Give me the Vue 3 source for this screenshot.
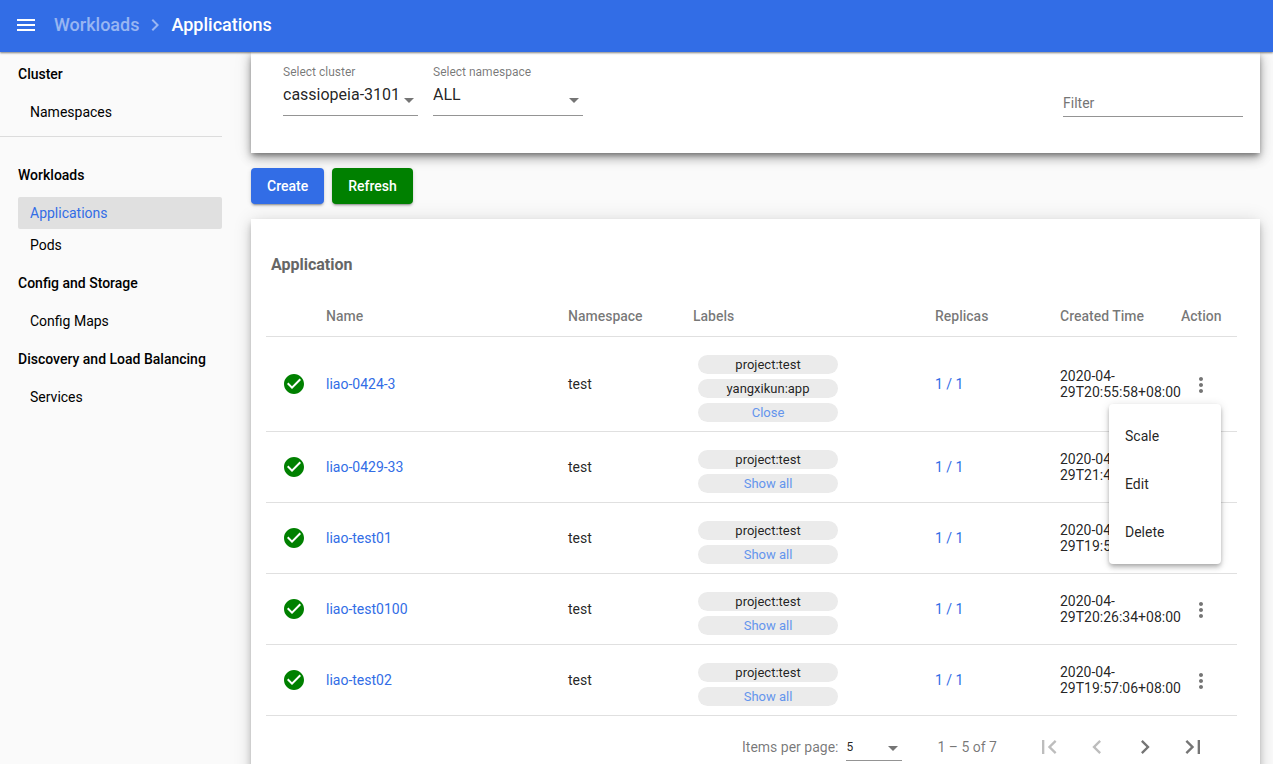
<script setup>
import { ref } from 'vue'

const groups = [
  { title: 'Cluster', items: ['Namespaces'], divider: true },
  { title: 'Workloads', items: ['Applications', 'Pods'] },
  { title: 'Config and Storage', items: ['Config Maps'] },
  { title: 'Discovery and Load Balancing', items: ['Services'] },
]
const active = ref('Applications')

const cluster = ref('cassiopeia-3101')
const namespace = ref('ALL')
const filter = ref('')
const pageSize = ref('5')

const rows = ref([
  { name: 'liao-0424-3', time: '2020-04-29T20:55:58+08:00', open: true },
  { name: 'liao-0429-33', time: '2020-04-29T21:45:12+08:00', open: false },
  { name: 'liao-test01', time: '2020-04-29T19:56:41+08:00', open: false },
  { name: 'liao-test0100', time: '2020-04-29T20:26:34+08:00', open: false },
  { name: 'liao-test02', time: '2020-04-29T19:57:06+08:00', open: false },
])
const menuRow = ref('liao-0424-3')
const toggleMenu = (name) => {
  menuRow.value = menuRow.value === name ? '' : name
}
</script>

<template>
  <div class="shell">
    <header class="topbar">
      <button class="burger" type="button" aria-label="Toggle navigation">
        <svg viewBox="0 0 24 24" width="24" height="24"><path d="M3 18h18v-2H3v2zm0-5h18v-2H3v2zm0-7v2h18V6H3z" /></svg>
      </button>
      <nav class="crumbs" aria-label="Breadcrumb">
        <a class="crumb" href="#workloads">Workloads</a>
        <svg class="crumb-sep" viewBox="0 0 24 24" width="24" height="24"><path d="M10 6L8.590 7.410 13.170 12l-4.580 4.590L10 18l6-6z" /></svg>
        <span class="crumb-current">Applications</span>
      </nav>
    </header>

    <div class="body">
      <nav class="side" aria-label="Main">
        <section v-for="g in groups" :key="g.title" class="group" :class="{ divided: g.divider }">
          <h2 class="group-title">{{ g.title }}</h2>
          <a
            v-for="item in g.items"
            :key="item"
            class="side-link"
            :class="{ active: item === active }"
            href="#"
            @click.prevent="active = item"
          >{{ item }}</a>
        </section>
      </nav>

      <main class="main">
        <section class="card filters">
          <div class="field cluster">
            <label for="cluster">Select cluster</label>
            <div class="select-wrap">
              <select id="cluster" v-model="cluster"><option>cassiopeia-3101</option></select>
              <span class="arrow"></span>
            </div>
          </div>
          <div class="field namespace">
            <label for="namespace">Select namespace</label>
            <div class="select-wrap">
              <select id="namespace" v-model="namespace"><option>ALL</option><option>test</option></select>
              <span class="arrow"></span>
            </div>
          </div>
          <input v-model="filter" class="filter" type="text" placeholder="Filter" aria-label="Filter" />
        </section>

        <div class="actions">
          <button class="btn create" type="button">Create</button>
          <button class="btn refresh" type="button">Refresh</button>
        </div>

        <section class="card listing">
          <h1 class="card-title">Application</h1>
          <table class="grid">
            <colgroup>
              <col class="c-icon" /><col /><col class="c-mid" /><col /><col class="c-mid" /><col class="c-time" /><col class="c-action" />
            </colgroup>
            <thead>
              <tr>
                <th></th>
                <th>Name</th>
                <th>Namespace</th>
                <th>Labels</th>
                <th>Replicas</th>
                <th>Created Time</th>
                <th>Action</th>
              </tr>
            </thead>
            <tbody>
              <tr v-for="row in rows" :key="row.name">
                <td class="status">
                  <svg viewBox="0 0 24 24" width="24" height="24" role="img" aria-label="Running"><path d="M12 2C6.480 2 2 6.480 2 12s4.480 10 10 10 10-4.480 10-10S17.520 2 12 2zm-2 15l-5-5 1.410-1.410L10 14.170l7.590-7.590L19 8l-9 9z" /></svg>
                </td>
                <td><a class="link" href="#">{{ row.name }}</a></td>
                <td>test</td>
                <td class="labels">
                  <div class="chips">
                    <span class="chip">project:test</span>
                    <span v-if="row.open" class="chip">yangxikun:app</span>
                    <button class="chip toggle" type="button" @click="row.open = !row.open">{{ row.open ? 'Close' : 'Show all' }}</button>
                  </div>
                </td>
                <td><a class="link" href="#">1 / 1</a></td>
                <td class="time">{{ row.time }}</td>
                <td>
                  <div class="more-wrap">
                    <button class="more" type="button" aria-label="Actions" @click="toggleMenu(row.name)">
                      <svg viewBox="0 0 24 24" width="24" height="24"><path d="M12 8c1.100 0 2-.9 2-2s-.9-2-2-2-2 .9-2 2 .9 2 2 2zm0 2c-1.100 0-2 .9-2 2s.9 2 2 2 2-.9 2-2-.9-2-2-2zm0 6c-1.100 0-2 .9-2 2s.9 2 2 2 2-.9 2-2-.9-2-2-2z" /></svg>
                    </button>
                    <div v-if="menuRow === row.name" class="menu" role="menu">
                      <button type="button" role="menuitem">Scale</button>
                      <button type="button" role="menuitem">Edit</button>
                      <button type="button" role="menuitem">Delete</button>
                    </div>
                  </div>
                </td>
              </tr>
            </tbody>
          </table>

          <footer class="pager">
            <label for="size">Items per page:</label>
            <div class="select-wrap size">
              <select id="size" v-model="pageSize"><option>5</option><option>10</option></select>
              <span class="arrow"></span>
            </div>
            <span class="range">1 – 5 of 7</span>
            <div class="pager-buttons">
              <button type="button" disabled aria-label="First page">
                <svg viewBox="0 0 24 24" width="28" height="28"><path d="M18.410 16.590L13.820 12l4.590-4.590L17 6l-6 6 6 6zM6 6h2v12H6z" /></svg>
              </button>
              <button type="button" disabled aria-label="Previous page">
                <svg viewBox="0 0 24 24" width="28" height="28"><path d="M15.410 7.410L14 6l-6 6 6 6 1.410-1.410L10.830 12z" /></svg>
              </button>
              <button type="button" aria-label="Next page">
                <svg viewBox="0 0 24 24" width="28" height="28"><path d="M10 6L8.590 7.410 13.170 12l-4.580 4.590L10 18l6-6z" /></svg>
              </button>
              <button type="button" aria-label="Last page">
                <svg viewBox="0 0 24 24" width="28" height="28"><path d="M5.590 7.410L10.180 12l-4.590 4.590L7 18l6-6-6-6zM16 6h2v12h-2z" /></svg>
              </button>
            </div>
          </footer>
        </section>
      </main>
    </div>
  </div>
</template>

<style>
body {
  margin: 0;
  background: #fafafa;
}
</style>

<style scoped>
.shell {
  height: 100vh;
  display: flex;
  flex-direction: column;
  overflow: hidden;
  background: #fafafa;
  color: rgba(0, 0, 0, 0.87);
  font: 400 14px/20px Roboto, sans-serif;
}
.shell * {
  box-sizing: border-box;
}
button,
select,
input {
  font: inherit;
  color: inherit;
  border: 0;
  margin: 0;
  padding: 0;
  background: none;
}
button {
  cursor: pointer;
}
svg {
  display: block;
  fill: currentColor;
}
a {
  text-decoration: none;
}

.topbar {
  position: relative;
  z-index: 2;
  flex: none;
  display: flex;
  align-items: center;
  height: 52px;
  padding: 0 14px 2px;
  background: #326de6;
  color: #fff;
  box-shadow: 0 1px 2px rgba(0, 0, 0, 0.5);
}
.burger {
  margin-right: 16px;
}
.crumbs {
  display: flex;
  align-items: center;
  font-size: 18px;
  font-weight: 500;
  line-height: 24px;
}
.crumb,
.crumb-sep {
  color: rgba(255, 255, 255, 0.5);
}
.crumb-sep {
  margin: 0 4px;
}

.body {
  flex: 1;
  min-height: 0;
  display: flex;
  gap: 29px;
}
.side {
  flex: none;
  width: 222px;
  color: #000;
}
.group-title {
  margin: 0;
  padding: 12px 0 12px 18px;
  font-size: 14px;
  font-weight: 500;
  line-height: 20px;
}
.group.divided {
  padding-bottom: 8px;
  margin-bottom: 16px;
  border-bottom: 1px solid #dcdcdc;
}
.side-link {
  display: block;
  margin-left: 18px;
  padding: 6px 12px;
  border-radius: 2px;
  color: #000;
}
.side-link.active {
  background: #e0e0e0;
  color: #326de6;
}

.main {
  flex: 1;
  min-width: 0;
  padding-right: 13px;
}
.card {
  background: #fff;
}
.filters {
  display: flex;
  align-items: flex-start;
  gap: 15px;
  padding: 12px 17px 36px 32px;
  box-shadow: 0 3px 5px -1px rgba(0, 0, 0, 0.34), 0 5px 10px rgba(0, 0, 0, 0.3), 0 1px 18px rgba(0, 0, 0, 0.1);
}
.field label {
  display: block;
  font-size: 12px;
  line-height: 16px;
  color: rgba(0, 0, 0, 0.54);
}
.cluster {
  width: 135px;
}
.namespace {
  width: 150px;
}
.select-wrap {
  display: flex;
  align-items: center;
  border-bottom: 1px solid #949494;
}
.field .select-wrap {
  height: 36px;
  padding-top: 3px;
}
.select-wrap select {
  flex: 1;
  min-width: 0;
  appearance: none;
  outline: 0;
}
.field select {
  height: 24px;
  margin-bottom: 8px;
  font-size: 16px;
}
.arrow {
  flex: none;
  margin: 3px 4px 0;
  border: 5px solid transparent;
  border-top-color: #757575;
  border-bottom: 0;
}
.filter {
  width: 180px;
  height: 28px;
  margin: 25px 0 0 auto;
  border-bottom: 1px solid #949494;
  border-radius: 0;
  outline: 0;
}
.filter::placeholder {
  color: #757575;
  opacity: 1;
}

.actions {
  display: flex;
  gap: 8px;
  padding: 15px 0;
}
.btn {
  height: 36px;
  padding: 0 16px;
  border-radius: 4px;
  color: #fff;
  font-weight: 500;
  box-shadow: 0 3px 1px -2px rgba(0, 0, 0, 0.2), 0 2px 2px rgba(0, 0, 0, 0.14), 0 1px 5px rgba(0, 0, 0, 0.12);
}
.create {
  background: #326de6;
}
.refresh {
  background: green;
}

.listing {
  padding: 34px 23px 32px 15px;
  box-shadow: 0 3px 5px -1px rgba(0, 0, 0, 0.2), 0 6px 10px rgba(0, 0, 0, 0.14), 0 1px 18px rgba(0, 0, 0, 0.12);
}
.card-title {
  margin: 0;
  padding-left: 5px;
  font-size: 16px;
  font-weight: 700;
  line-height: 24px;
  color: #666;
}
.grid {
  width: 100%;
  margin-top: 19px;
  table-layout: fixed;
  border-collapse: separate;
  border-spacing: 0;
}
.c-icon {
  width: 60px;
}
.c-mid {
  width: 125px;
}
.c-time {
  width: 121px;
}
.c-action {
  width: 56px;
}
th,
td {
  padding: 0;
  text-align: left;
  vertical-align: middle;
  border-bottom: 1px solid #e0e0e0;
}
th {
  height: 41px;
  font-weight: 500;
  color: rgba(0, 0, 0, 0.54);
}
.status {
  padding-left: 16px;
  color: green;
}
.link {
  color: #326de6;
}
.labels {
  padding: 18px 0 9px 5px;
}
.chips {
  display: flex;
  flex-direction: column;
  gap: 5px;
  width: 140px;
}
.chip {
  height: 19px;
  border-radius: 10px;
  background: #ebebeb;
  font-size: 13px;
  line-height: 19px;
  text-align: center;
}
.toggle {
  color: #6495ed;
}
.time {
  line-height: 16px;
}
.more-wrap {
  position: relative;
  width: 40px;
}
.more {
  display: flex;
  align-items: center;
  justify-content: center;
  width: 40px;
  height: 40px;
  padding-top: 2px;
  color: #757575;
}
.menu {
  position: absolute;
  z-index: 1;
  top: 100%;
  right: 0;
  width: 112px;
  padding: 8px 0;
  border-radius: 4px;
  background: #fff;
  box-shadow: 0 2px 4px -1px rgba(0, 0, 0, 0.2), 0 4px 5px rgba(0, 0, 0, 0.14), 0 1px 10px rgba(0, 0, 0, 0.12);
}
.menu button {
  display: block;
  width: 100%;
  height: 48px;
  padding: 0 16px;
  text-align: left;
}

.pager {
  display: flex;
  align-items: center;
  justify-content: flex-end;
  height: 62px;
  padding-right: 20px;
  color: rgba(0, 0, 0, 0.54);
}
.size {
  width: 56px;
  height: 28px;
  margin: 0 35px 0 8px;
}
.size select {
  font-size: 12px;
  color: rgba(0, 0, 0, 0.87);
}
.pager-buttons {
  display: flex;
  margin-left: 28px;
}
.pager-buttons button {
  display: flex;
  align-items: center;
  justify-content: center;
  width: 48px;
  height: 40px;
  color: #757575;
}
.pager-buttons button:disabled {
  color: #bdbdbd;
}
</style>
